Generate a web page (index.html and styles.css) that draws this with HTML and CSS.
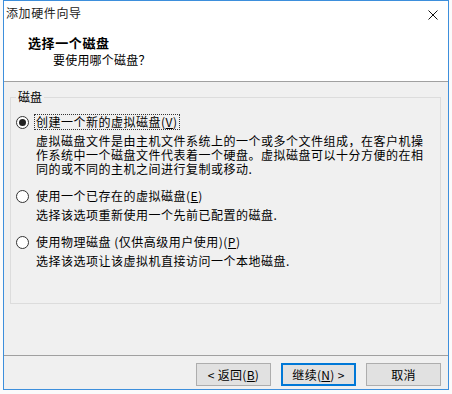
FILE: index.html
```html
<!DOCTYPE html>
<html>
<head>
  <meta charset="utf-8">
  <link rel="stylesheet" href="styles.css">
</head>
<body>
  <div class="dialog">
    <div class="header">
      <div class="titlebar">
        <span class="title">添加硬件向导</span>
        <svg class="close" width="10" height="10" viewBox="0 0 10 10">
          <path d="M0.5 0.5 L9.5 9.5 M9.5 0.5 L0.5 9.5" stroke="#111" stroke-width="1" fill="none"/>
        </svg>
      </div>
      <div class="heading">选择一个磁盘</div>
      <div class="subheading">要使用哪个磁盘？</div>
    </div>

    <div class="content">
      <fieldset class="group">
        <legend>磁盘</legend>

        <div class="option">
          <div class="option-row">
            <span class="radio checked"></span>
            <span class="label focused">创建一个新的虚拟磁盘(<u>V</u>)</span>
          </div>
          <div class="desc">
            <div>虚拟磁盘文件是由主机文件系统上的一个或多个文件组成，在客户机操</div>
            <div>作系统中一个磁盘文件代表着一个硬盘。虚拟磁盘可以十分方便的在相</div>
            <div>同的或不同的主机之间进行复制或移动.</div>
          </div>
        </div>

        <div class="option">
          <div class="option-row">
            <span class="radio"></span>
            <span class="label">使用一个已存在的虚拟磁盘(<u>E</u>)</span>
          </div>
          <div class="desc"><div>选择该选项重新使用一个先前已配置的磁盘.</div></div>
        </div>

        <div class="option">
          <div class="option-row">
            <span class="radio"></span>
            <span class="label">使用物理磁盘 (仅供高级用户使用)(<u>P</u>)</span>
          </div>
          <div class="desc"><div>选择该选项让该虚拟机直接访问一个本地磁盘.</div></div>
        </div>
      </fieldset>
    </div>

    <div class="footer">
      <button class="btn">&lt; 返回(<u>B</u>)</button>
      <button class="btn default">继续(<u>N</u>) &gt;</button>
      <button class="btn">取消</button>
    </div>
  </div>
</body>
</html>
```

FILE: styles.css
```css
body {
  margin: 0;
  background: #fbfbfb;
  font-family: "Noto Sans CJK SC", "Noto Sans", sans-serif;
  font-size: 12px;
  color: #000;
}

.dialog {
  margin-left: 3px;
  width: 444px;
  height: 388px;
  border: 1px solid #3d8fdc;
  background: #f0f0f0;
  display: flex;
  flex-direction: column;
}

/* Header (title bar + wizard page title) */
.header {
  background: #fff;
  height: 80px;
  border-bottom: 1px solid #a0a0a0;
}

.titlebar {
  height: 23px;
  display: flex;
  align-items: center;
  justify-content: space-between;
  padding-left: 2px;
}

.title {
  line-height: 23px;
  letter-spacing: 0.6px;
  color: #222;
}

.close {
  margin-right: 10px;
  margin-top: 4px;
}

.heading {
  margin-top: 11px;
  padding-left: 24px;
  font-weight: bold;
  font-size: 13px;
  line-height: 16px;
  letter-spacing: 0.6px;
}

.subheading {
  margin-top: 1px;
  padding-left: 49px;
  line-height: 16px;
  letter-spacing: 0.2px;
}

/* Content */
.content {
  flex: 1;
}

.group {
  margin: 8px 7px 0 6px;
  padding: 0 0 35px 0;
  border: 1px solid #dcdcdc;
  min-width: 0;
}

.group legend {
  margin-left: 5px;
  padding: 0 2px;
  line-height: 14px;
}

.option {
  margin-top: 12px;
}

.option:first-of-type {
  margin-top: 10px;
}

.option-row {
  display: flex;
  align-items: center;
  height: 16px;
  padding-left: 5px;
}

.radio {
  width: 11px;
  height: 11px;
  border: 1px solid #333;
  border-radius: 50%;
  background: #fff;
  display: flex;
  align-items: center;
  justify-content: center;
  margin-right: 5px;
}

.radio.checked::after {
  content: "";
  width: 7px;
  height: 7px;
  border-radius: 50%;
  background: #222;
}

.label {
  line-height: 14px;
  letter-spacing: 0.5px;
  padding: 0 1px;
  border: 1px dotted transparent;
}

.label.focused {
  border-color: #333;
}

.desc {
  margin-top: 4px;
  padding-left: 25px;
  letter-spacing: 0.5px;
  white-space: nowrap;
}

.desc div {
  height: 14px;
  line-height: 14px;
}

/* Footer buttons */
.footer {
  height: 34px;
  border-top: 1px solid #a0a0a0;
  display: flex;
  justify-content: flex-end;
  align-items: flex-start;
  gap: 10px;
  padding-top: 7px;
  padding-right: 7px;
  box-sizing: border-box;
}

.btn {
  width: 75px;
  height: 23px;
  padding: 0;
  background: #e1e1e1;
  border: 1px solid #adadad;
  font-family: inherit;
  font-size: 12px;
  color: #000;
  letter-spacing: 0.3px;
}

.btn.default {
  border-color: #0078d7;
  box-shadow: inset 0 0 0 1px #0078d7;
}
```
